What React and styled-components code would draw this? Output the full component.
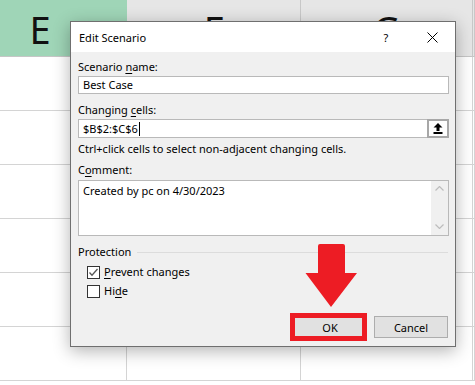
import React from "react";
import styled, { createGlobalStyle } from "styled-components";

const GlobalStyle = createGlobalStyle`
  html, body { margin: 0; padding: 0; background: #ffffff; overflow: hidden; }
  body { font-family: "Noto Sans", "Open Sans", sans-serif; }
  * { box-sizing: border-box; }
`;

const Page = styled.div`
  position: relative;
  width: 475px;
  height: 385px;
  overflow: hidden;
`;

const Sheet = styled.div`
  display: grid;
  grid-template-columns: 127px 174px 172px 1fr;
  grid-template-rows: 57px repeat(6, 54px);
`;

const HeadCell = styled.div`
  display: flex;
  align-items: center;
  justify-content: center;
  padding-right: ${(p) => p.$shift || 0}px;
  background: ${(p) => (p.$selected ? "#9fd5b7" : "#e6e6e6")};
  border-right: 1px solid ${(p) => (p.$selected ? "#9fd5b7" : "#c8c8c8")};
  border-bottom: 1px solid #c6c6c6;
  font-family: "Noto Sans", sans-serif;
  font-size: 38px;
  color: #111;
  line-height: 1;
  padding-top: 2px;
`;

const Cell = styled.div`
  border-right: 1px solid #d4d4d4;
  border-bottom: 1px solid #d4d4d4;
  background: #fff;
`;

const Dialog = styled.div`
  position: absolute;
  left: 70px;
  top: 21px;
  width: 386px;
  height: 326px;
  background: #f0f0f0;
  border: 1px solid #6f6f6f;
  box-shadow: 0 4px 16px rgba(0, 0, 0, 0.3);
  display: flex;
  flex-direction: column;
  font-size: 11px;
  color: #000;
`;

const TitleBar = styled.div`
  height: 30px;
  background: #fff;
  display: flex;
  align-items: center;
  padding-left: 8px;
`;

const Title = styled.div`
  flex: 1;
  font-size: 11px;
`;

const TitleButton = styled.div`
  width: 46px;
  height: 30px;
  display: flex;
  align-items: center;
  justify-content: center;
  font-size: 11px;
`;

const Body = styled.div`
  flex: 1;
  display: flex;
  flex-direction: column;
  padding: 0 6px 0 7px;
`;

const Label = styled.div`
  line-height: 16px;
  height: 16px;
  margin-top: ${(p) => p.$mt}px;
  white-space: nowrap;
`;

const U = styled.span`
  text-decoration: underline;
  text-underline-offset: 2px;
`;

const TextBox = styled.div`
  margin-top: 1px;
  height: 18px;
  background: #fff;
  border: 1px solid #b9b9b9;
  padding-left: 4px;
  line-height: 16px;
  white-space: nowrap;
`;

const RefRow = styled.div`
  margin-top: 1px;
  height: 19px;
  display: flex;
`;

const RefInput = styled.div`
  flex: 1;
  background: #fff;
  border: 1px solid #b9b9b9;
  border-right: none;
  padding-left: 4px;
  line-height: 17px;
  white-space: nowrap;
  display: flex;
  align-items: center;
`;

const Caret = styled.span`
  display: inline-block;
  width: 1px;
  height: 14px;
  background: #000;
  margin-left: 1px;
`;

const RefButton = styled.div`
  width: 22px;
  background: #fdfdfd;
  border: 2px solid #a7a7a7;
  display: flex;
  align-items: center;
  justify-content: center;
`;

const CommentBox = styled.div`
  margin-top: 2px;
  height: 56px;
  background: #fff;
  border: 1px solid #b9b9b9;
  display: flex;
`;

const CommentText = styled.div`
  flex: 1;
  padding: 2px 0 0 4px;
  line-height: 16px;
`;

const ScrollBar = styled.div`
  width: 17px;
  background: #f0f0f0;
  display: flex;
  flex-direction: column;
  justify-content: space-between;
  align-items: center;
  padding: 5px 0 6px;
`;

const Group = styled.div`
  margin-top: 8px;
  height: 16px;
  display: flex;
  align-items: center;
  gap: 6px;
  line-height: 16px;
`;

const GroupLine = styled.div`
  flex: 1;
  height: 1px;
  background: #dcdcdc;
  margin-right: 1px;
`;

const CheckRow = styled.div`
  margin-top: ${(p) => p.$mt}px;
  height: 16px;
  display: flex;
  align-items: center;
  padding-left: 9px;
  gap: 4px;
  line-height: 16px;
`;

const Box = styled.div`
  width: 13px;
  height: 13px;
  border: 1px solid #333;
  background: #fff;
  display: flex;
  align-items: center;
  justify-content: center;
`;

const ButtonRow = styled.div`
  margin-top: 17px;
  display: flex;
  justify-content: flex-end;
  gap: 7px;
  padding-right: 1px;
`;

const Button = styled.div`
  width: 74px;
  height: 22px;
  background: #e1e1e1;
  border: 1px solid #adadad;
  display: flex;
  align-items: center;
  justify-content: center;
`;

const Highlight = styled.div`
  position: absolute;
  left: 290px;
  top: 313px;
  width: 77px;
  height: 28px;
  border: 5px solid #ed1c24;
`;

const Arrow = styled.svg`
  position: absolute;
  left: 305px;
  top: 243px;
`;

const cols = [
  { l: "E", selected: true, shift: 46 },
  { l: "F" },
  { l: "G" },
  { l: "" },
];

export default function App() {
  return (
    <Page>
      <GlobalStyle />
      <Sheet>
        {cols.map((c, i) => (
          <HeadCell key={"h" + i} $selected={c.selected} $shift={c.shift}>
            {c.l}
          </HeadCell>
        ))}
        {Array.from({ length: 24 }).map((_, i) => (
          <Cell key={i} />
        ))}
      </Sheet>

      <Dialog>
        <TitleBar>
          <Title>Edit Scenario</Title>
          <TitleButton>?</TitleButton>
          <TitleButton>
            <svg width="11" height="11" viewBox="0 0 11 11">
              <path d="M0.5 0.5 L10.5 10.5 M10.5 0.5 L0.5 10.5" stroke="#000" strokeWidth="1" fill="none" />
            </svg>
          </TitleButton>
        </TitleBar>
        <Body>
          <Label $mt={7}>
            Scenario <U>n</U>ame:
          </Label>
          <TextBox>Best Case</TextBox>
          <Label $mt={8}>
            Changing <U>c</U>ells:
          </Label>
          <RefRow>
            <RefInput>
              $B$2:$C$6
              <Caret />
            </RefInput>
            <RefButton>
              <svg width="10" height="11" viewBox="0 0 10 11">
                <path d="M5 0 L9.5 4.5 L6.5 4.5 L6.5 8 L3.5 8 L3.5 4.5 L0.5 4.5 Z" fill="#000" />
                <rect x="0.5" y="9" width="9" height="2" fill="#000" />
              </svg>
            </RefButton>
          </RefRow>
          <Label $mt={3}>Ctrl+click cells to select non-adjacent changing cells.</Label>
          <Label $mt={5}>
            C<U>o</U>mment:
          </Label>
          <CommentBox>
            <CommentText>Created by pc on 4/30/2023</CommentText>
            <ScrollBar>
              <svg width="9" height="5" viewBox="0 0 9 5">
                <path d="M0.5 4.5 L4.5 0.5 L8.5 4.5" stroke="#bdbdbd" strokeWidth="1.2" fill="none" />
              </svg>
              <svg width="9" height="5" viewBox="0 0 9 5">
                <path d="M0.5 0.5 L4.5 4.5 L8.5 0.5" stroke="#bdbdbd" strokeWidth="1.2" fill="none" />
              </svg>
            </ScrollBar>
          </CommentBox>
          <Group>
            Protection
            <GroupLine />
          </Group>
          <CheckRow $mt={4}>
            <Box>
              <svg width="11" height="11" viewBox="0 0 11 11">
                <path d="M1.5 5.5 L4 8.2 L9.5 2" stroke="#555" strokeWidth="1.3" fill="none" />
              </svg>
            </Box>
            <span>
              <U>P</U>revent changes
            </span>
          </CheckRow>
          <CheckRow $mt={3}>
            <Box />
            <span>
              Hi<U>d</U>e
            </span>
          </CheckRow>
          <ButtonRow>
            <Button>OK</Button>
            <Button>Cancel</Button>
          </ButtonRow>
        </Body>
      </Dialog>

      <Highlight />
      <Arrow width="53" height="65" viewBox="0 0 53 65">
        <path
          d="M13 3 Q13 1 15 1 L38 1 Q40 1 40 3 L40 30 L52 30 L26 64 L0.5 30 L13 30 Z"
          fill="#ed1c24"
        />
      </Arrow>
    </Page>
  );
}
